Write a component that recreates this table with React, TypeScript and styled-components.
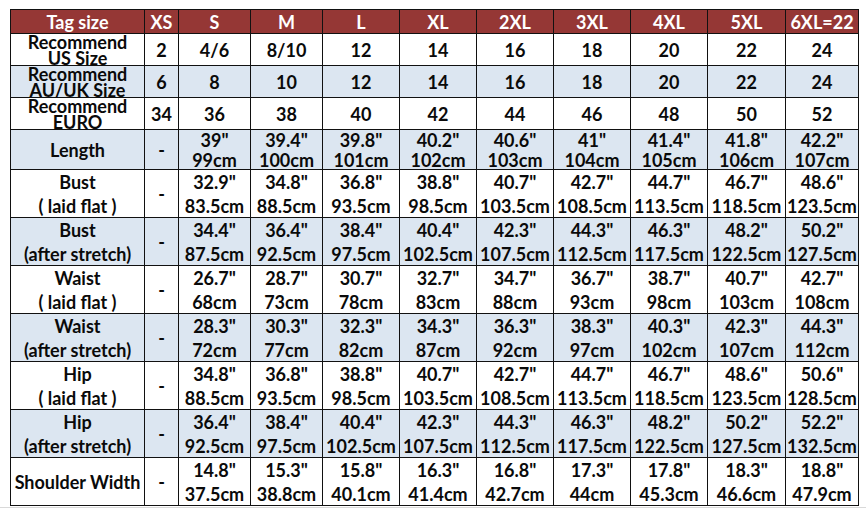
import React from "react";
import styled, { createGlobalStyle } from "styled-components";

const GlobalStyle = createGlobalStyle`
  html, body { margin: 0; padding: 0; background: #ffffff; }
  body { font-family: Lato, "Open Sans", Arial, sans-serif; }
`;

const Page = styled.div`
  width: 866px;
  height: 512px;
  padding-top: 9px;
  box-sizing: border-box;
`;

const Frame = styled.div`
  border-bottom: 1px solid #d9d9d9;
  padding: 0 8px 1px 10px;
`;

const COLS = [134, 34, 72, 72, 77, 77, 77, 77, 77, 78, 73];

const Grid = styled.div`
  display: grid;
  grid-template-columns: ${COLS.map((c) => `${c}px`).join(" ")};
  grid-template-rows: 24px 32px 32px 32px 40px repeat(7, 48px);
  width: max-content;
  border-top: 1px solid #111;
  border-left: 1px solid #111;
  font-family: Lato, "Open Sans", Arial, sans-serif;
  font-weight: 700;
  font-size: 18px;
  color: #0a0a0a;
`;

const Cell = styled.div<{ $shade: "head" | "blue" | "white"; $lh: number }>`
  box-sizing: border-box;
  border-right: 1px solid #111;
  border-bottom: 1px solid #111;
  display: flex;
  flex-direction: column;
  align-items: center;
  justify-content: center;
  text-align: center;
  white-space: nowrap;
  line-height: ${(p) => p.$lh}px;
  background: ${(p) =>
    p.$shade === "head" ? "#953735" : p.$shade === "blue" ? "#dce6f1" : "#ffffff"};
  color: ${(p) => (p.$shade === "head" ? "#ffffff" : "#0a0a0a")};
`;

const Line = styled.span`
  display: block;
`;

type Row = { label: string[]; values: string[][]; shade: "head" | "blue" | "white"; lh: number };

const pair = (a: string[], b: string[]) => a.map((v, i) => [`${v}"`, `${b[i]}cm`]);

const rows: Row[] = [
  {
    label: ["Tag size"],
    values: ["XS", "S", "M", "L", "XL", "2XL", "3XL", "4XL", "5XL", "6XL=22"].map((v) => [v]),
    shade: "head",
    lh: 20,
  },
  {
    label: ["Recommend", "US Size"],
    values: ["2", "4/6", "8/10", "12", "14", "16", "18", "20", "22", "24"].map((v) => [v]),
    shade: "white",
    lh: 16,
  },
  {
    label: ["Recommend", "AU/UK Size"],
    values: ["6", "8", "10", "12", "14", "16", "18", "20", "22", "24"].map((v) => [v]),
    shade: "blue",
    lh: 16,
  },
  {
    label: ["Recommend", "EURO"],
    values: ["34", "36", "38", "40", "42", "44", "46", "48", "50", "52"].map((v) => [v]),
    shade: "white",
    lh: 16,
  },
  {
    label: ["Length"],
    values: [["-"], ...pair(
      ["39", "39.4", "39.8", "40.2", "40.6", "41", "41.4", "41.8", "42.2"],
      ["99", "100", "101", "102", "103", "104", "105", "106", "107"]
    )],
    shade: "blue",
    lh: 20,
  },
  {
    label: ["Bust", "( laid flat )"],
    values: [["-"], ...pair(
      ["32.9", "34.8", "36.8", "38.8", "40.7", "42.7", "44.7", "46.7", "48.6"],
      ["83.5", "88.5", "93.5", "98.5", "103.5", "108.5", "113.5", "118.5", "123.5"]
    )],
    shade: "white",
    lh: 24,
  },
  {
    label: ["Bust", "(after stretch)"],
    values: [["-"], ...pair(
      ["34.4", "36.4", "38.4", "40.4", "42.3", "44.3", "46.3", "48.2", "50.2"],
      ["87.5", "92.5", "97.5", "102.5", "107.5", "112.5", "117.5", "122.5", "127.5"]
    )],
    shade: "blue",
    lh: 24,
  },
  {
    label: ["Waist", "( laid flat )"],
    values: [["-"], ...pair(
      ["26.7", "28.7", "30.7", "32.7", "34.7", "36.7", "38.7", "40.7", "42.7"],
      ["68", "73", "78", "83", "88", "93", "98", "103", "108"]
    )],
    shade: "white",
    lh: 24,
  },
  {
    label: ["Waist", "(after stretch)"],
    values: [["-"], ...pair(
      ["28.3", "30.3", "32.3", "34.3", "36.3", "38.3", "40.3", "42.3", "44.3"],
      ["72", "77", "82", "87", "92", "97", "102", "107", "112"]
    )],
    shade: "blue",
    lh: 24,
  },
  {
    label: ["Hip", "( laid flat )"],
    values: [["-"], ...pair(
      ["34.8", "36.8", "38.8", "40.7", "42.7", "44.7", "46.7", "48.6", "50.6"],
      ["88.5", "93.5", "98.5", "103.5", "108.5", "113.5", "118.5", "123.5", "128.5"]
    )],
    shade: "white",
    lh: 24,
  },
  {
    label: ["Hip", "(after stretch)"],
    values: [["-"], ...pair(
      ["36.4", "38.4", "40.4", "42.3", "44.3", "46.3", "48.2", "50.2", "52.2"],
      ["92.5", "97.5", "102.5", "107.5", "112.5", "117.5", "122.5", "127.5", "132.5"]
    )],
    shade: "blue",
    lh: 24,
  },
  {
    label: ["Shoulder Width"],
    values: [["-"], ...pair(
      ["14.8", "15.3", "15.8", "16.3", "16.8", "17.3", "17.8", "18.3", "18.8"],
      ["37.5", "38.8", "40.1", "41.4", "42.7", "44", "45.3", "46.6", "47.9"]
    )],
    shade: "white",
    lh: 24,
  },
];

export default function App() {
  return (
    <>
      <GlobalStyle />
      <Page>
        <Frame>
          <Grid>
            {rows.map((row, r) => (
              <React.Fragment key={r}>
                <Cell $shade={row.shade} $lh={row.lh}>
                  {row.label.map((l, i) => (
                    <Line key={i}>{l}</Line>
                  ))}
                </Cell>
                {row.values.map((lines, c) => (
                  <Cell key={c} $shade={row.shade} $lh={row.lh}>
                    {lines.map((l, i) => (
                      <Line key={i}>{l}</Line>
                    ))}
                  </Cell>
                ))}
              </React.Fragment>
            ))}
          </Grid>
        </Frame>
      </Page>
    </>
  );
}
